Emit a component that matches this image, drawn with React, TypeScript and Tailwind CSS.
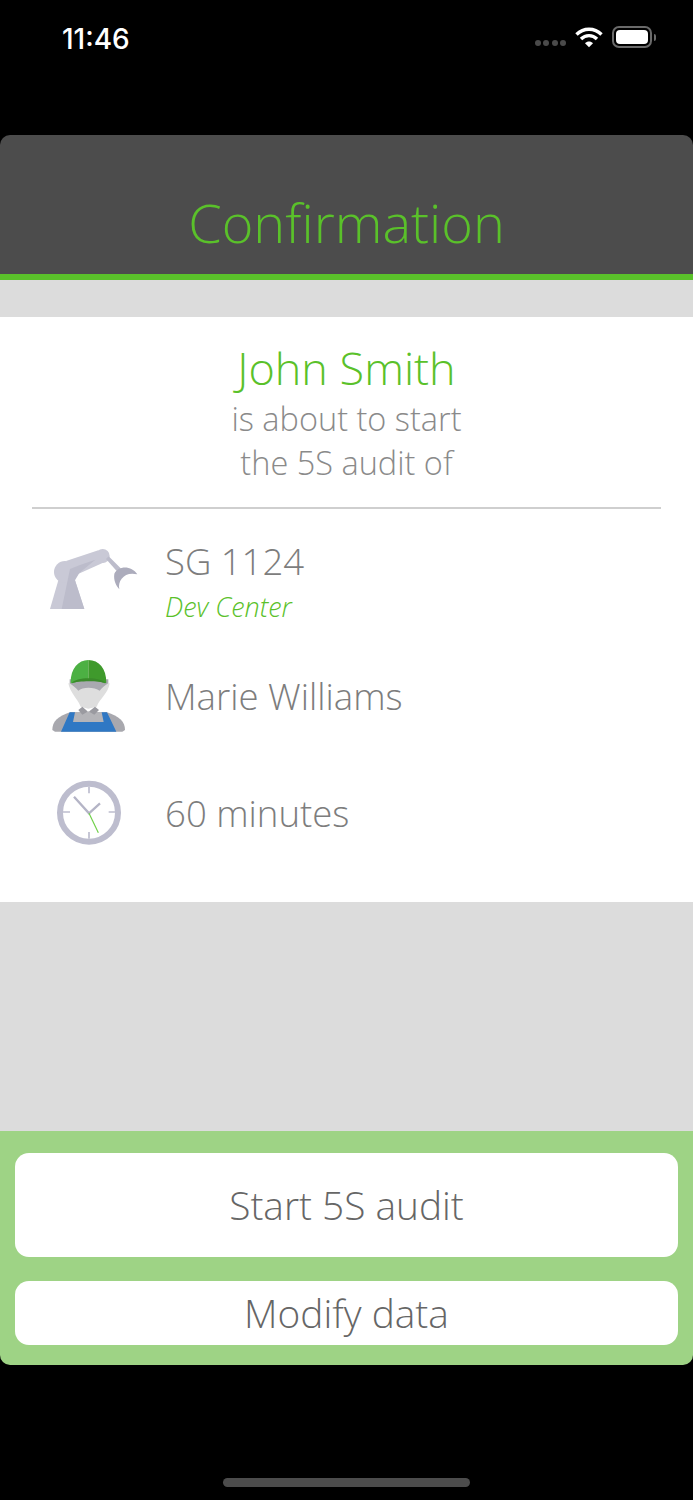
const font = { fontFamily: '"Open Sans", sans-serif' };

function WifiIcon() {
  return (
    <svg width="28" height="22" viewBox="0 0 28 22" fill="none">
      <path d="M1.5 8.5C8.5 1.5 19.5 1.5 26.5 8.5" stroke="white" strokeWidth="3.4" />
      <path d="M6 13C10.5 8.5 17.5 8.5 22 13" stroke="white" strokeWidth="3.4" />
      <path d="M10 17.2L14 21.2L18 17.2C15.8 15 12.2 15 10 17.2Z" fill="white" />
    </svg>
  );
}

function BatteryIcon() {
  return (
    <div className="flex items-center gap-[2px]">
      <div className="flex h-[22px] w-[40px] rounded-[7px] border-2 border-[#6a6a6a] p-[2px]">
        <div className="flex-1 rounded-[4px] bg-white" />
      </div>
      <div className="h-[7px] w-[2px] rounded-r-full bg-[#6a6a6a]" />
    </div>
  );
}

function RobotIcon() {
  return (
    <svg className="ml-[8px]" width="90" height="64" viewBox="54 50 270 192">
      <path d="M60 236L85 150H135L163 236Z" fill="#c9c9d6" />
      <circle cx="105" cy="125" r="33" fill="#c9c9d6" />
      <path d="M108 92L205 60L226 94L146 130Z" fill="#c9c9d6" />
      <circle cx="218" cy="77" r="21" fill="#c9c9d6" />
      <path d="M120 116L150 104L196 88L148 128L135 150L163 236H95Z" fill="#bcbccb" />
      <path d="M228 86L236 78L272 114L262 124Z" fill="#bcbccb" />
      <path d="M322 132C305 105 265 105 253 130C250 150 258 165 268 177C262 150 285 122 322 132Z" fill="#acacbc" />
    </svg>
  );
}

function WorkerIcon() {
  return (
    <svg width="80" height="76" viewBox="60 24 240 228">
      <path d="M70 240C70 215 85 200 125 186H232C272 200 288 215 288 240L280 245H78Z" fill="#a8a8ae" />
      <path d="M130 186H226V218H130Z" fill="#b4b4b8" />
      <path d="M118 100C124 130 145 145 155 170L178 176L203 170C213 145 238 130 242 100Z" fill="#dedede" />
      <path d="M148 180L160 170L178 186L198 170L210 180L196 194L178 184L160 194Z" fill="#9a9aa0" />
      <path d="M122 187H138L132 216H224L218 187H234L262 245H96Z" fill="#2f78c4" />
      <path d="M122 88H238V100C226 108 220 112 212 122C196 110 160 110 148 122C140 112 132 108 122 100Z" fill="#a9a9b0" />
      <path d="M125 98C125 55 148 30 178 30V92C158 92 140 94 130 100Z" fill="#4cb043" />
      <path d="M178 30C210 30 232 55 232 98L228 100C218 94 198 92 178 92Z" fill="#3f9a2c" />
      <path d="M128 100C140 80 216 80 230 100C214 92 146 92 128 100Z" fill="#3a8a2a" />
    </svg>
  );
}

function ClockIcon() {
  return (
    <svg width="66" height="66" viewBox="78 32 198 198" fill="none">
      <circle cx="177" cy="130" r="87" stroke="#bdbdce" strokeWidth="18" />
      <path d="M177 52V72M177 188V208M99 128H120M236 128H256" stroke="#bdbdce" strokeWidth="5" />
      <path d="M132 82L177 132L210 102" stroke="#b4b4c6" strokeWidth="7" />
      <path d="M177 132L205 190" stroke="#6fd048" strokeWidth="3.5" />
    </svg>
  );
}

function DetailRow({
  icon,
  children,
  className,
}: {
  icon: React.ReactNode;
  children: React.ReactNode;
  className: string;
}) {
  return (
    <div className={`flex items-center ${className}`}>
      <div className="flex w-[165px] shrink-0 justify-center pr-[19px] pl-[32px]">{icon}</div>
      <div className="min-w-0">{children}</div>
    </div>
  );
}

export default function App() {
  return (
    <div className="flex h-[1500px] w-[693px] flex-col bg-black font-light" style={font}>
      {/* status bar */}
      <div className="flex h-[135px] shrink-0 items-start justify-between pt-[23px] pr-[37px] pl-[62px]">
        <span className="text-[28px] leading-[32px] font-medium text-white" style={{ fontFamily: "Inter, sans-serif" }}>
          11:46
        </span>
        <div className="flex items-center gap-[9px] pt-[3px]">
          <div className="mt-[11px] flex gap-[2.4px]">
            <span className="h-[6px] w-[6px] rounded-full bg-[#4a4a4a]" />
            <span className="h-[6px] w-[6px] rounded-full bg-[#4a4a4a]" />
            <span className="h-[6px] w-[6px] rounded-full bg-[#4a4a4a]" />
            <span className="h-[6px] w-[6px] rounded-full bg-[#4a4a4a]" />
          </div>
          <WifiIcon />
          <BatteryIcon />
        </div>
      </div>

      {/* header */}
      <div className="flex h-[145px] shrink-0 items-end justify-center rounded-t-[10px] border-b-[6px] border-[#5ac12a] bg-[#4c4c4c] pb-[17px]">
        <h1 className="text-[54px] leading-[70px] font-light text-[#5ac12a]">Confirmation</h1>
      </div>

      <div className="flex flex-1 flex-col bg-[#dcdcdc] pt-[37px]">
        <div className="flex h-[585px] flex-col bg-white">
          <div className="mx-[32px] flex h-[192px] shrink-0 flex-col items-center border-b-2 border-[#cfcfcf] pt-[24px]">
            <p className="text-[45px] leading-[54px] text-[#5ac12a]">John Smith</p>
            <p className="mt-[2px] text-[32.5px] leading-[44px] text-[#8a8a8a]">is about to start</p>
            <p className="text-[32.5px] leading-[43px] text-[#8a8a8a]">the 5S audit of</p>
          </div>
          <DetailRow icon={<RobotIcon />} className="mt-[28px] h-[84px]">
            <div className="pt-[3px]">
              <p className="text-[36.5px] leading-[48px] text-[#7d7d7d]">SG 1124</p>
              <p className="mt-[4px] text-[27px] leading-[36px] text-[#5ac12a] italic">Dev Center</p>
            </div>
          </DetailRow>
          <DetailRow icon={<WorkerIcon />} className="mt-[33px] h-[84px]">
            <p className="text-[36.6px] leading-[48px] text-[#7d7d7d]">Marie Williams</p>
          </DetailRow>
          <DetailRow icon={<ClockIcon />} className="mt-[33px] h-[84px]">
            <p className="text-[36.6px] leading-[48px] text-[#7d7d7d]">60 minutes</p>
          </DetailRow>
        </div>
      </div>

      {/* actions */}
      <div className="flex h-[234px] shrink-0 flex-col rounded-b-[10px] bg-[#9ed385] px-[15px] pt-[22px]">
        <button type="button" className="h-[104px] rounded-[14px] bg-white text-[38.8px] font-light text-[#666666]">
          Start 5S audit
        </button>
        <button type="button" className="mt-[24px] h-[64px] rounded-[14px] bg-white text-[38.8px] leading-[64px] font-light text-[#666666]">
          Modify data
        </button>
      </div>

      <div className="flex h-[135px] shrink-0 items-start justify-center pt-[113px]">
        <div className="h-[9px] w-[247px] rounded-full bg-[#4c4c4c]" />
      </div>
    </div>
  );
}
